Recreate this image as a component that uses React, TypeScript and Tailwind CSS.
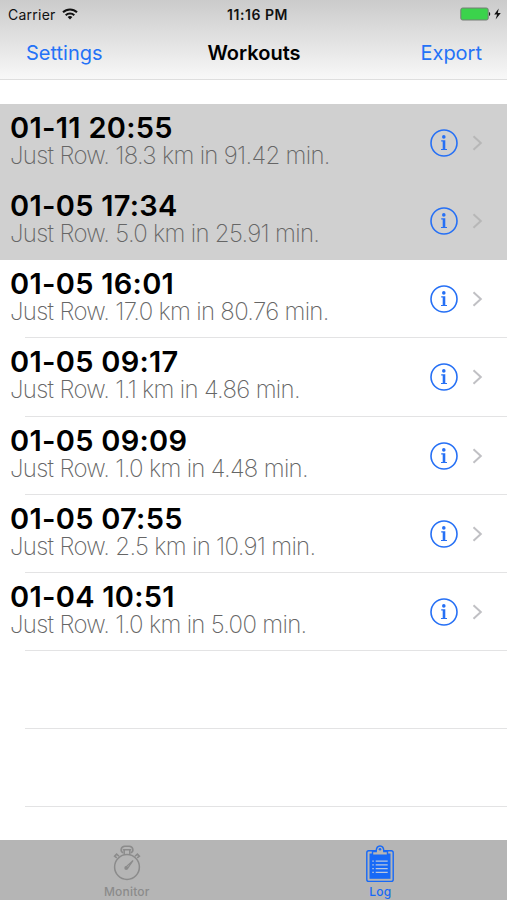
type Workout = {
  date: string;
  summary: string;
  selected?: boolean;
};

const workouts: Workout[] = [
  { date: "01-11 20:55", summary: "Just Row. 18.3 km in 91.42 min.", selected: true },
  { date: "01-05 17:34", summary: "Just Row. 5.0 km in 25.91 min.", selected: true },
  { date: "01-05 16:01", summary: "Just Row. 17.0 km in 80.76 min." },
  { date: "01-05 09:17", summary: "Just Row. 1.1 km in 4.86 min." },
  { date: "01-05 09:09", summary: "Just Row. 1.0 km in 4.48 min." },
  { date: "01-05 07:55", summary: "Just Row. 2.5 km in 10.91 min." },
  { date: "01-04 10:51", summary: "Just Row. 1.0 km in 5.00 min." },
];

function StatusBar() {
  return (
    <div className="grid h-7 grid-cols-3 items-center pl-2 pr-1 text-[14px] text-[#111]">
      <div className="flex items-center gap-1.5">
        <span className="tracking-[0.25px]">Carrier</span>
        <svg width="16" height="12" viewBox="0 0 16 12" fill="none" stroke="#111" strokeWidth="2">
          <path d="M1 4.3a10 10 0 0 1 14 0M3.7 7.2a6.1 6.1 0 0 1 8.6 0" />
          <path d="M8 11.5 5.6 9.1a3.4 3.4 0 0 1 4.8 0Z" fill="#111" stroke="none" />
        </svg>
      </div>
      <div className="pl-1 text-center text-[14px] font-semibold tracking-[0.55px] whitespace-nowrap">11:16 PM</div>
      <div className="flex items-center justify-end">
        <svg width="43" height="14" viewBox="0 0 43 14">
          <rect x="0.8" y="1" width="27.4" height="12" rx="1.8" fill="#3bd34c" stroke="#777c77" />
          <path d="M29 5c1.6.2 1.6 3.8 0 4Z" fill="#222" />
          <path d="m38.7 1.6-4.5 6h2.9l-1.5 4.8 5.2-6.3h-3Z" fill="#111" />
        </svg>
      </div>
    </div>
  );
}

function InfoButton() {
  return (
    <button>
      <svg width="28" height="28" viewBox="0 0 28 28" fill="#2670f5">
        <circle cx="14" cy="14" r="13" fill="none" stroke="#2670f5" strokeWidth="1.6" />
        <circle cx="13.8" cy="7.9" r="1.8" />
        <path d="M11.2 11.3h4.1v8.6H17V21h-6v-1.1h1.7v-7.5h-1.5Z" />
      </svg>
    </button>
  );
}

function WorkoutRow({ workout }: { workout: Workout }) {
  return (
    <li className={workout.selected ? "bg-[#d0d0d0]" : "bg-white"}>
      <div className="flex h-[78.15px] items-center">
        <div className="h-full flex-1 pl-[10px] pt-[9px]">
          <div className="text-[29px] leading-[30px] font-semibold tracking-[0.28px] text-black">{workout.date}</div>
          <div className="text-[24px] leading-[26px] font-extralight tracking-[-0.7px] text-[#666]">
            {workout.summary}
          </div>
        </div>
        <InfoButton />
        <svg className="mr-[23px] ml-[14px]" width="12" height="16" viewBox="0 0 12 16" fill="none">
          <path d="m1.5 1.3 7.3 6.7-7.3 6.7" stroke={workout.selected ? "#b7b7b7" : "#c0c0c4"} strokeWidth="2" />
        </svg>
      </div>
      {!workout.selected && <Separator />}
    </li>
  );
}

function Separator() {
  return <div className="-mt-px ml-[25px] h-px bg-[#e3e3e4]" />;
}

function StopwatchIcon() {
  return (
    <svg width="30" height="36" viewBox="0 0 30 36" fill="none" stroke="#8b8b8b" strokeWidth="1.5">
      <circle cx="15" cy="22" r="12.4" />
      <path d="M11.2 7.8C7.8 6.6 8.6 1.4 12.8 1.2h4.4c4.2.2 5 5.4 1.6 6.6" />
      <path d="M10.7 4.8h8.6M12.2 5v4.5m5.6-4.5v4.5M4.8 12.8l-2.2-1.7 2-2 2.4 2.1M25.2 12.8l2.2-1.7-2-2-2.4 2.1" />
      <path d="m13.5 22.4 7.6-6.9M15.3 23.8l5.8-8.3" strokeWidth="1.2" />
      <circle cx="14.2" cy="23" r="1.9" fill="#8b8b8b" stroke="none" />
    </svg>
  );
}

function ClipboardIcon() {
  return (
    <svg width="30" height="38" viewBox="0 0 30 38" fill="none" stroke="#1769f7">
      <rect x="1.8" y="5.8" width="26.4" height="30.6" rx="2" strokeWidth="1.4" />
      <path d="M4.5 8.5h21v25.3h-21Z" fill="#1769f7" stroke="none" />
      <path d="M7.5 10.2V6.5h3.7C11.2-.8 18.8-.8 18.8 6.5h3.7v3.7Z" fill="#b5b5b5" strokeWidth="1.4" />
      <circle cx="15" cy="4.2" r="1.3" fill="#1769f7" stroke="none" />
      <path d="M10.7 16.2h12M10.7 19.9h12M10.7 23.6h12M10.7 27.3h12" stroke="#b9c6df" strokeWidth="1.3" />
      <path d="M7.3 16.2h1.5M7.3 19.9h1.5M7.3 23.6h1.5M7.3 27.3h1.5" stroke="#b9c6df" strokeWidth="1.3" />
    </svg>
  );
}

export default function App() {
  return (
    <div className="flex h-[900px] w-[507px] flex-col overflow-hidden bg-white font-['Inter',sans-serif]">
      <header className="h-20 shrink-0 border-b border-[#dedede] bg-linear-to-b from-[#cbcbcb] to-[#f8f8f8]">
        <StatusBar />
        <nav className="grid h-[49px] grid-cols-3 items-center pr-[25px] pl-[26px] text-[20px]">
          <button className="text-left text-[#2472f7]">Settings</button>
          <h1 className="text-center font-semibold text-black">Workouts</h1>
          <button className="text-right text-[#2472f7]">Export</button>
        </nav>
      </header>
      <main className="flex-1 pt-6">
        <ul>
          {workouts.map((workout) => (
            <WorkoutRow key={workout.date} workout={workout} />
          ))}
        </ul>
        <div className="h-[78.15px]" />
        <Separator />
        <div className="h-[78.15px]" />
        <Separator />
      </main>
      <footer className="grid h-[60px] shrink-0 grid-cols-2 bg-[#b5b5b5] text-[12px] font-medium tracking-[0.2px]">
        <button className="flex flex-col items-center pt-[5px] text-[#8b8b8b]">
          <StopwatchIcon />
          <span className="mt-[3px] leading-4">Monitor</span>
        </button>
        <button className="flex flex-col items-center pt-[5px] text-[#1769f7]">
          <ClipboardIcon />
          <span className="mt-px leading-4">Log</span>
        </button>
      </footer>
    </div>
  );
}
